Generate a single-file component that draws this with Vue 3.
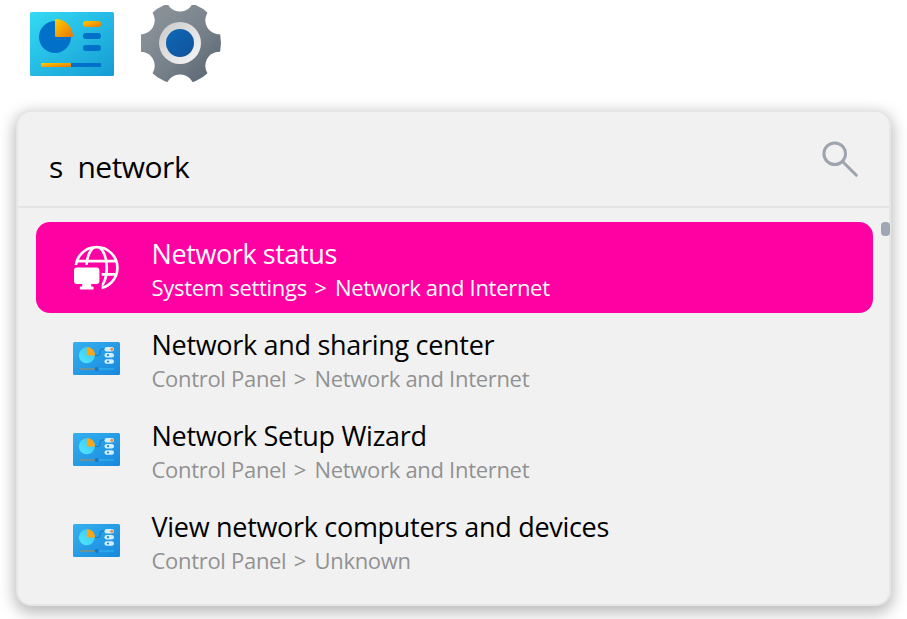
<script setup>
const results = [
  { title: 'Network status', path: ['System settings', 'Network and Internet'], icon: 'globe', selected: true, id: 'status' },
  { title: 'Network and sharing center', path: ['Control Panel', 'Network and Internet'], icon: 'panel', id: 'sharing' },
  { title: 'Network Setup Wizard', path: ['Control Panel', 'Network and Internet'], icon: 'panel', id: 'wizard' },
  { title: 'View network computers and devices', path: ['Control Panel', 'Unknown'], icon: 'panel', id: 'devices' },
]
</script>

<template>
  <main class="screen">
    <div class="apps">
      <svg class="app-panel" viewBox="0 0 84 64">
        <defs>
          <linearGradient id="sky" x1="0" y1="0" x2="1" y2="1">
            <stop offset="0" stop-color="#34daf4" /><stop offset="1" stop-color="#159bd3" />
          </linearGradient>
          <linearGradient id="amber" x1="0" y1="0" x2="1" y2="1">
            <stop offset="0" stop-color="#ffcf00" /><stop offset="1" stop-color="#e87400" />
          </linearGradient>
        </defs>
        <rect width="84" height="64" rx="1.5" fill="url(#sky)" />
        <circle cx="25" cy="25" r="16" fill="#0070c8" />
        <path d="M25 8.2Q25 7 26.5 7C35.5 7.5 42 14 43 23.5Q43 25 41.5 25H26.5Q25 25 25 23.5Z" fill="url(#amber)" />
        <rect x="53" y="9" width="18" height="6" rx="3" fill="url(#amber)" />
        <rect x="53" y="21" width="18" height="6" rx="3" fill="#0070c8" />
        <rect x="53" y="33" width="18" height="6" rx="3" fill="#0070c8" />
        <rect x="41" y="51" width="30" height="4" rx=".6" fill="#0070c8" />
        <rect x="11" y="51" width="30" height="4" rx=".6" fill="url(#amber)" />
      </svg>
      <svg class="app-gear" viewBox="-40 -40 81 80">
        <defs>
          <linearGradient id="steel" x1="0" y1="0" x2="1" y2="1">
            <stop offset=".2" stop-color="#889097" /><stop offset=".55" stop-color="#77818a" /><stop offset="1" stop-color="#54616e" />
          </linearGradient>
          <linearGradient id="ring" x1="0" y1="0" x2="1" y2="1">
            <stop offset="0" stop-color="#c9c9c9" /><stop offset="1" stop-color="#f8f8f8" />
          </linearGradient>
          <linearGradient id="hub" x1="0" y1="0" x2="1" y2="1">
            <stop offset="0" stop-color="#0c69b6" /><stop offset="1" stop-color="#14519a" />
          </linearGradient>
          <mask id="teeth" maskUnits="userSpaceOnUse" x="-42" y="-42" width="84" height="84">
            <circle r="41" fill="#fff" />
            <circle v-for="n in 6" :key="n" cy="-45.3" r="13.9" :transform="`rotate(${n * 60})`" fill="#000" />
          </mask>
        </defs>
        <rect x="-39" y="-38" width="80" height="77" fill="url(#steel)" mask="url(#teeth)" />
        <circle r="21" fill="url(#ring)" />
        <circle r="14" fill="url(#hub)" />
      </svg>
    </div>

    <section class="launcher">
      <header class="search">
        <span class="query">s&nbsp; network</span>
        <svg class="magnifier" viewBox="0 0 36 36">
          <circle cx="12.7" cy="12.7" r="10.8" />
          <path d="M20.5 20.5L34.3 34.3" />
        </svg>
      </header>
      <div class="body">
        <ul class="results">
          <li v-for="item in results" :key="item.id" class="row" :class="{ selected: item.selected }">
            <svg v-if="item.icon === 'globe'" class="icon" viewBox="-.7 -.5 47 46">
              <mask id="cut">
                <rect width="46" height="46" fill="#fff" />
                <path d="M0 19.5H25Q28 19.5 28 22.5V46H0Z" fill="#000" />
              </mask>
              <g mask="url(#cut)" fill="none" stroke="#fff" stroke-width="2.7">
                <circle cx="22.9" cy="22.3" r="20.8" />
                <ellipse cx="22.9" cy="22.3" rx="10.2" ry="20.8" />
                <path d="M3.5 15.6H42M27 28.8H42" />
              </g>
              <path d="M3 22H23Q25.7 22 25.7 25V35.5Q25.7 38.5 23 38.5H17.5V41H19Q20 41 20 42.5T19 44H7Q6 44 6 42.5T7 41H8.5V38.5H3Q.3 38.5 .3 35.5V25Q.3 22 3 22Z" fill="#fff" />
            </svg>
            <svg v-else class="icon panel-icon" viewBox="0 0 47 33">
              <defs>
                <linearGradient :id="`bg-${item.id}`" x1="0" y1="0" x2="1" y2="1">
                  <stop offset="0" stop-color="#36b0ef" /><stop offset="1" stop-color="#1788dc" />
                </linearGradient>
                <linearGradient :id="`pie-${item.id}`" x1="0" y1="1" x2="1" y2="0">
                  <stop offset="0" stop-color="#53e7ff" /><stop offset="1" stop-color="#35c6f4" />
                </linearGradient>
              </defs>
              <rect width="47" height="33" rx="1.5" :fill="`url(#bg-${item.id})`" />
              <path d="M22 13.5H25Q27 13.5 27 11.5V9Q27 7 29 7H32" fill="none" stroke="#1476c4" stroke-width="1" />
              <circle cx="13.8" cy="13.3" r="8" :fill="`url(#pie-${item.id})`" />
              <path d="M13.8 5A8.3 8.3 0 0 1 22.1 13.6H13.8Z" fill="#faa616" />
              <g fill="#d2efff">
                <rect x="31.5" y="5" width="9.5" height="4.4" rx="2.2" />
                <rect x="31.5" y="11" width="9.5" height="4.4" rx="2.2" />
                <rect x="31.5" y="17.3" width="9.5" height="4.4" rx="2.2" />
              </g>
              <circle cx="38.8" cy="7.2" r="1.5" fill="#ee8c35" />
              <circle cx="35" cy="13.2" r="1.1" fill="#2588ce" />
              <circle cx="35" cy="19.5" r="1.1" fill="#2588ce" />
              <path d="M6.5 27H23" stroke="#b58a4c" />
              <path d="M24 27H41" stroke="#35b9f2" />
              <circle cx="23.7" cy="27" r="2" fill="#1377c9" />
            </svg>
            <div class="text">
              <span class="title">{{ item.title }}</span>
              <span class="path">{{ item.path[0] }} <span class="sep">&gt;</span> {{ item.path[1] }}</span>
            </div>
          </li>
        </ul>
        <div class="thumb"></div>
      </div>
    </section>
  </main>
</template>

<style>
body {
  background: #fff;
  overflow: hidden;
}
</style>

<style scoped>
.screen {
  box-sizing: border-box;
  width: 907px;
  height: 619px;
  padding: 3px 16px 0;
  overflow: hidden;
  font-family: "Open Sans", "Noto Sans", sans-serif;
}
.apps {
  display: flex;
  align-items: flex-start;
  gap: 26px;
  height: 107px;
  padding-left: 14px;
}
.app-panel {
  width: 84px;
  height: 64px;
  margin-top: 9px;
}
.app-gear {
  width: 81px;
  height: 80px;
}
.launcher {
  box-sizing: border-box;
  width: 875px;
  height: 496px;
  border: 2px solid #e6e6e6;
  border-radius: 15px;
  background: #f1f1f1;
  box-shadow: 0 5px 15px 2px rgba(0, 0, 0, 0.27);
}
.search {
  box-sizing: border-box;
  display: flex;
  justify-content: space-between;
  height: 96px;
  padding: 29px 31px 0 31px;
  border-bottom: 2px solid #e4e4e4;
}
.query {
  padding-top: 1px;
  font-size: 30px;
  line-height: 50px;
  letter-spacing: -0.5px;
  white-space: pre;
}
.magnifier {
  width: 36px;
  height: 36px;
  fill: none;
  stroke: #9da4ad;
  stroke-width: 3;
  stroke-linecap: round;
}
.body {
  display: flex;
  justify-content: space-between;
  margin-right: -1px;
  padding-top: 14px;
}
.results {
  width: 837px;
  margin: 0 0 0 18px;
  padding: 0;
  list-style: none;
}
.row {
  box-sizing: border-box;
  display: flex;
  align-items: center;
  gap: 31.5px;
  height: 91px;
  padding-left: 37px;
  border-radius: 14px;
  color: #000;
}
.icon {
  width: 47px;
  height: 46px;
  flex: none;
}
.panel-icon {
  height: 33px;
}
.text {
  display: flex;
  flex-direction: column;
  padding-top: 4px;
  white-space: nowrap;
}
.title {
  font-size: 27px;
  line-height: 36px;
  letter-spacing: -0.3px;
}
.path {
  font-size: 22px;
  line-height: 31px;
  letter-spacing: -0.3px;
  color: #919191;
}
.sep {
  margin: 0 3px 0 2px;
}
.selected {
  background: #ff00a2;
  color: #fff;
}
.selected .path {
  color: #fff;
}
.selected .title {
  letter-spacing: -0.4px;
}
.thumb {
  width: 9px;
  height: 14px;
  border-radius: 4px;
  background: #9fa7b2;
}
</style>
